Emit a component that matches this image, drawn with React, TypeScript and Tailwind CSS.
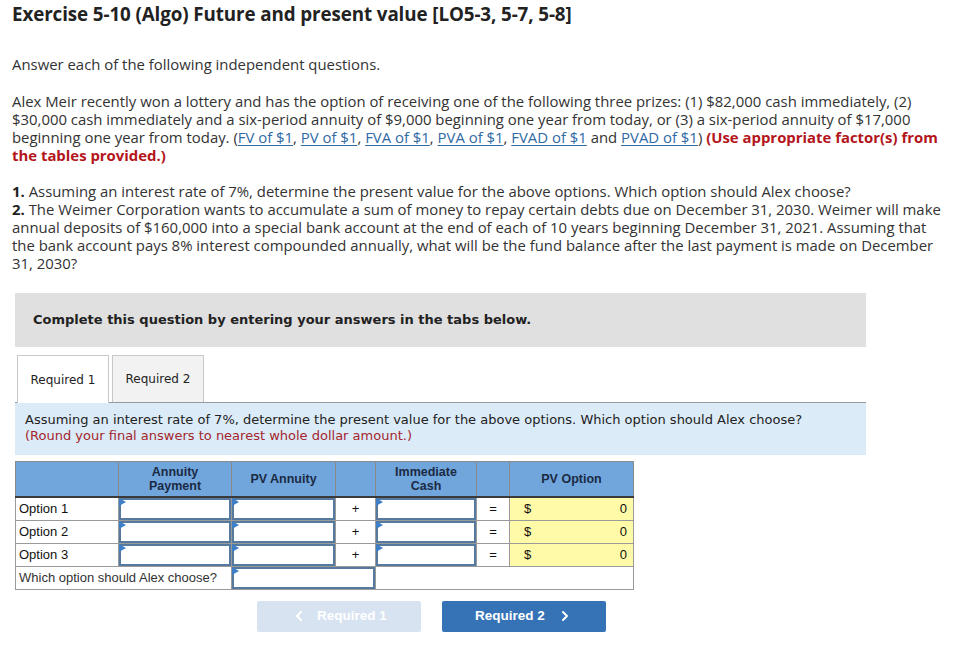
import { ChevronLeft, ChevronRight } from "lucide-react";

const body = "font-['Open_Sans',sans-serif]";
const verdana = "font-['DejaVu_Sans',Verdana,sans-serif]";
const arial = "font-['Liberation_Sans',Arial,sans-serif]";

function Link({ children }: { children: React.ReactNode }) {
  return <span className="text-[#2f6aa5] underline underline-offset-2">{children}</span>;
}

function Entry() {
  return (
    <div className="relative h-[22px] w-full border-2 border-[#56799f] bg-white">
      <span className="absolute -left-[2px] -top-[2px] h-0 w-0 border-y-[4px] border-l-[7px] border-y-transparent border-l-[#3f7ec8]" />
    </div>
  );
}

const rows = ["Option 1", "Option 2", "Option 3"];

export default function App() {
  return (
    <div className="min-h-[651px] w-[956px] bg-white text-[#333]">
      <div className="px-3 pt-[2px]">
        <h1 className={`${body} text-[18.8px] font-bold leading-[24px] tracking-[-0.1px] text-[#222]`}>
          Exercise 5-10 (Algo) Future and present value [LO5-3, 5-7, 5-8]
        </h1>

        <div className={`${body} mt-[29px] w-[944px] whitespace-nowrap text-[14.9px] leading-[18px]`}>
          <p>Answer each of the following independent questions.</p>
          <p className="mt-[19px]">
            Alex Meir recently won a lottery and has the option of receiving one of the following three prizes: (1) $82,000 cash immediately, (2)
            <br />
            $30,000 cash immediately and a six-period annuity of $9,000 beginning one year from today, or (3) a six-period annuity of $17,000
            <br />
            beginning one year from today. (<Link>FV of $1</Link>, <Link>PV of $1</Link>, <Link>FVA of $1</Link>, <Link>PVA of $1</Link>,{" "}
            <Link>FVAD of $1</Link> and <Link>PVAD of $1</Link>){" "}
            <span className="font-bold text-[#b3151b]">(Use appropriate factor(s) from</span>
            <br />
            <span className="font-bold text-[#b3151b]">the tables provided.)</span>
          </p>
          <p className="mt-[18px]">
            <b className="text-[#222]">1.</b> Assuming an interest rate of 7%, determine the present value for the above options. Which option should Alex choose?
            <br />
            <b className="text-[#222]">2.</b> The Weimer Corporation wants to accumulate a sum of money to repay certain debts due on December 31, 2030. Weimer will make
            <br />
            annual deposits of $160,000 into a special bank account at the end of each of 10 years beginning December 31, 2021. Assuming that
            <br />
            the bank account pays 8% interest compounded annually, what will be the fund balance after the last payment is made on December
            <br />
            31, 2030?
          </p>
        </div>
      </div>

      <div className="ml-[15px] mt-[21px] w-[851px]">
        <div className={`${verdana} flex h-[54px] items-center bg-[#e0e0e0] pl-[18px] text-[13px] font-bold text-[#222]`}>
          Complete this question by entering your answers in the tabs below.
        </div>

        <div className={`${verdana} mt-[8px] flex gap-[3px] pl-[2px] text-[12px] text-[#222]`}>
          <div className="relative -mb-px flex h-[48px] w-[92px] items-center justify-center border border-b-0 border-[#c8c8c8] bg-white">
            Required 1
          </div>
          <div className="flex h-[47px] w-[92px] items-center justify-center border border-[#c8c8c8] border-b-0 bg-[#f2f2f2]">
            Required 2
          </div>
        </div>
        <div className={`${verdana} h-[53px] border-t border-[#9a9a9a] bg-[#dcebf8] pl-[10px] pt-[9px] text-[13px] leading-[16px] text-[#222]`}>
          <p>Assuming an interest rate of 7%, determine the present value for the above options. Which option should Alex choose?</p>
          <p className="text-[#a3262c]">(Round your final answers to nearest whole dollar amount.)</p>
        </div>

        <table className={`${arial} mt-[6px] w-[618px] table-fixed border-collapse text-[13px] text-[#111]`}>
          <colgroup>
            <col className="w-[103px]" />
            <col className="w-[113px]" />
            <col className="w-[104px]" />
            <col className="w-[40px]" />
            <col className="w-[101px]" />
            <col className="w-[33px]" />
            <col className="w-[124px]" />
          </colgroup>
          <thead>
            <tr className="h-[35px] bg-[#70a6dc] text-center text-[12.5px] font-bold leading-[14px] text-[#1b2a44]">
              <th className="border border-[#8a8a8a]" />
              <th className="border border-[#8a8a8a]">Annuity<br />Payment</th>
              <th className="border border-[#8a8a8a]">PV Annuity</th>
              <th className="border border-[#8a8a8a]" />
              <th className="border border-[#8a8a8a]">Immediate<br />Cash</th>
              <th className="border border-[#8a8a8a]" />
              <th className="border border-[#8a8a8a]">PV Option</th>
            </tr>
          </thead>
          <tbody>
            {rows.map((r, i) => (
              <tr key={r} className={`h-[23px] ${i === 0 ? "border-t-2 border-[#3a3a3a]" : ""}`}>
                <td className="border border-[#9a9a9a] px-[3px]">{r}</td>
                <td className="border border-[#9a9a9a] p-0"><Entry /></td>
                <td className="border border-[#9a9a9a] p-0"><Entry /></td>
                <td className="border border-[#9a9a9a] text-center">+</td>
                <td className="border border-[#9a9a9a] p-0"><Entry /></td>
                <td className="border border-[#9a9a9a] text-center">=</td>
                <td className="border border-[#9a9a9a] bg-[#fffaa8] px-[6px]">
                  <div className="flex justify-between pl-[8px]">
                    <span>$</span>
                    <span>0</span>
                  </div>
                </td>
              </tr>
            ))}
            <tr className="h-[23px]">
              <td colSpan={2} className="border border-[#9a9a9a] px-[3px] text-[#333]">Which option should Alex choose?</td>
              <td colSpan={2} className="border border-[#9a9a9a] p-0"><Entry /></td>
              <td colSpan={3} className="border border-[#9a9a9a]" />
            </tr>
          </tbody>
        </table>

        <div className={`${arial} mt-[11px] flex gap-[21px] pl-[242px] text-[13.5px] font-bold text-white`}>
          <div className="flex h-[31px] w-[164px] items-center justify-center gap-[10px] rounded-[2px] bg-[#d7e3f1]">
            <ChevronLeft className="h-4 w-4" strokeWidth={3} />
            Required 1
          </div>
          <div className="flex h-[31px] w-[164px] items-center justify-center gap-[12px] rounded-[2px] bg-[#3573b6]">
            Required 2
            <ChevronRight className="h-4 w-4" strokeWidth={3} />
          </div>
        </div>
      </div>
    </div>
  );
}
